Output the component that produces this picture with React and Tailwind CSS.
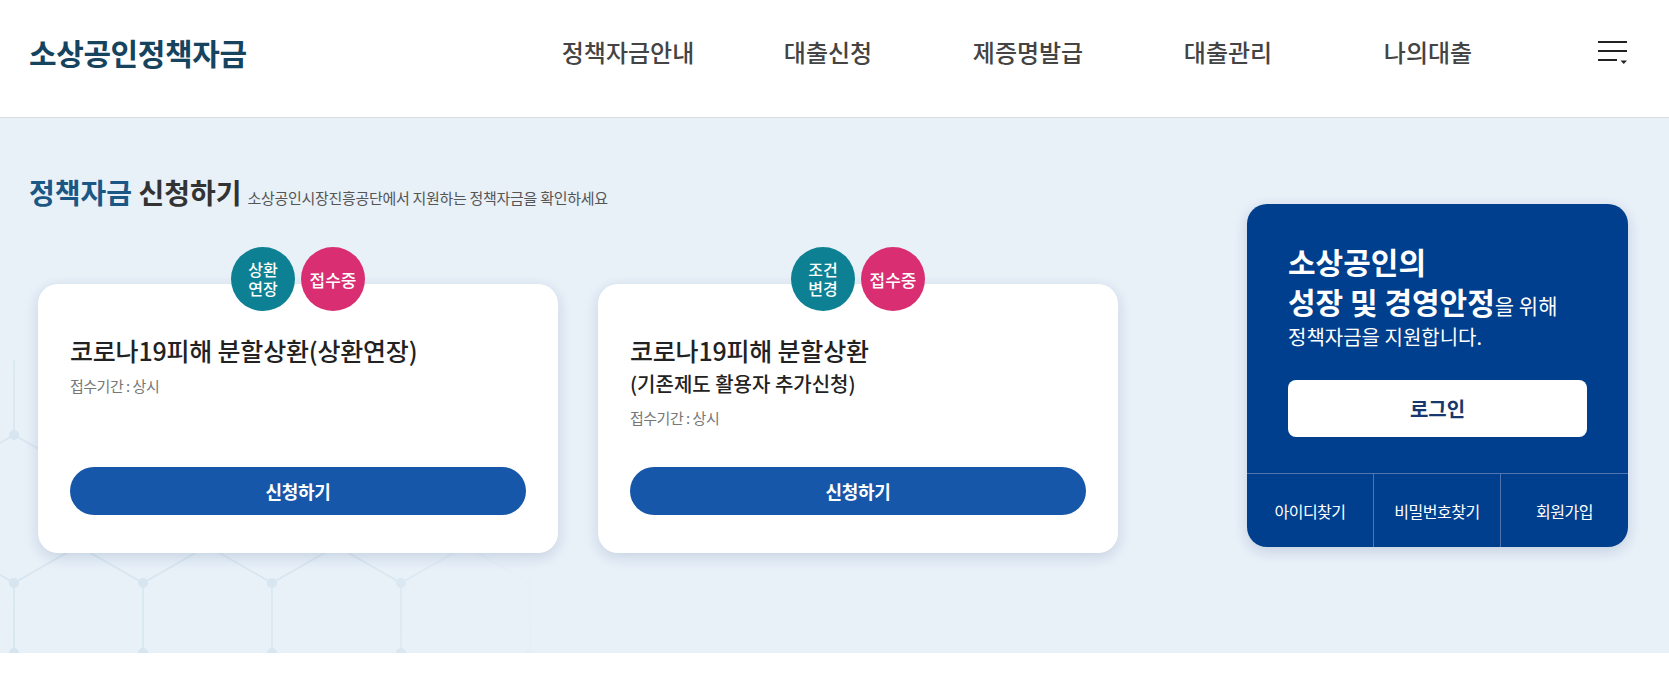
import React from 'react';

const font = { fontFamily: '"Noto Sans CJK KR", "Noto Sans", sans-serif' };

const navItems = ['정책자금안내', '대출신청', '제증명발급', '대출관리', '나의대출'];

const HexPattern = () => {
  const cols = [0, 1, 2, 3, 4];
  const w = 129;
  const xs = cols.map((i) => 14 + w * i);
  const lines = [];
  const dots = [];
  xs.forEach((x, i) => {
    const m = x + w / 2;
    const pm = x - w / 2;
    // lower row
    lines.push([x, 465, x, 545]);
    lines.push([x, 465, m, 428]);
    lines.push([pm, 428, x, 465]);
    lines.push([m, 428, m, 353]);
    // upper row
    lines.push([pm, 353, x, 317]);
    lines.push([x, 317, m, 353]);
    lines.push([x, 317, x, 242]);
    dots.push([x, 465]);
    dots.push([x, 535]);
    dots.push([x, 317]);
    if (i === 0) {
      lines.push([pm, 428, pm, 353]);
    }
  });
  return (
    <svg className="absolute left-0 top-0 pointer-events-none" width="620" height="535" viewBox="0 0 620 535">
      <defs>
        <radialGradient id="fade" cx="0" cy="535" r="540" gradientUnits="userSpaceOnUse">
          <stop offset="0" stopColor="#fff" stopOpacity="1" />
          <stop offset="0.7" stopColor="#fff" stopOpacity="0.85" />
          <stop offset="1" stopColor="#fff" stopOpacity="0" />
        </radialGradient>
        <mask id="m">
          <rect x="0" y="0" width="620" height="535" fill="url(#fade)" />
        </mask>
      </defs>
      <g mask="url(#m)" stroke="#d5e4ef" strokeWidth="1.5" fill="none">
        {lines.map((l, i) => (
          <line key={i} x1={l[0]} y1={l[1]} x2={l[2]} y2={l[3]} />
        ))}
        {dots.map((d, i) => (
          <circle key={'d' + i} cx={d[0]} cy={d[1]} r="5" fill="#d5e4ef" stroke="none" />
        ))}
      </g>
    </svg>
  );
};

const Badge = ({ color, children }) => (
  <div
    className={`w-[64px] h-[64px] rounded-full flex items-center justify-center text-white text-center text-[16px] leading-[19px] font-medium ${color}`}
  >
    {children}
  </div>
);

const LoanCard = ({ badge, title, sub }) => (
  <div className="relative w-[520px] h-[269px] bg-white rounded-[20px] shadow-[0_4px_14px_rgba(20,60,110,0.16)] flex flex-col px-[32px] pt-[50px] pb-[38px]">
    <div className="absolute -top-[37px] left-1/2 -translate-x-1/2 flex gap-[6px]">
      <Badge color="bg-[#0d8193]">{badge}</Badge>
      <Badge color="bg-[#d92e72]">
        <span className="text-[17px]">접수중</span>
      </Badge>
    </div>
    <p className="text-[25px] leading-[32px] font-medium text-[#222] tracking-[-0.2px]">{title}</p>
    {sub && <p className="mt-[4px] text-[20px] leading-[28px] font-medium text-[#222]">{sub}</p>}
    <p className="mt-[10px] text-[15px] leading-[20px] text-[#777] tracking-[-0.5px]">접수기간 : 상시</p>
    <button className="mt-auto h-[48px] w-full rounded-full bg-[#1757a9] text-white text-[18px] font-bold tracking-[-0.3px]">
      신청하기
    </button>
  </div>
);

export default function App() {
  return (
    <div style={font} className="w-full bg-white">
      {/* Header */}
      <header className="h-[118px] border-b border-[#dddddd] flex items-center pb-[13px]">
        <h1 className="pl-[29px] text-[30px] font-bold text-[#16445f] tracking-[-0.4px] leading-none">
          소상공인정책자금
        </h1>
        <nav className="ml-auto flex">
          {navItems.map((item) => (
            <a key={item} className="w-[200px] text-center text-[24px] text-[#444] font-medium">
              {item}
            </a>
          ))}
        </nav>
        <button className="ml-[70px] mr-[41px] w-[30px] h-[24px] pt-[1px]">
          <svg width="30" height="24" viewBox="0 0 30 24">
            <rect x="0" y="0" width="29" height="2" fill="#222" />
            <rect x="0" y="9" width="29" height="2" fill="#222" />
            <rect x="0" y="18" width="19" height="2" fill="#222" />
            <path d="M22.5 19.5 L29 19.5 L25.75 23 Z" fill="#222" />
          </svg>
        </button>
      </header>

      {/* Main section */}
      <section className="relative h-[535px] bg-[#e8f0f8] overflow-hidden">
        <HexPattern />
        <div className="relative flex">
          <div className="pl-[29px] pt-[57px]">
            <div className="flex items-baseline h-[34px]">
              <h2 className="text-[28px] leading-[34px] font-bold">
                <span className="text-[#1a5785]">정책자금</span> <span className="text-[#333]">신청하기</span>
              </h2>
              <span className="ml-[6px] text-[15px] text-[#555] tracking-[-0.3px]">
                소상공인시장진흥공단에서 지원하는 정책자금을 확인하세요
              </span>
            </div>
            <div className="mt-[75px] ml-[9px] flex gap-[40px]">
              <LoanCard
                badge={
                  <span>
                    상환
                    <br />
                    연장
                  </span>
                }
                title="코로나19피해 분할상환(상환연장)"
              />
              <LoanCard
                badge={
                  <span>
                    조건
                    <br />
                    변경
                  </span>
                }
                title="코로나19피해 분할상환"
                sub="(기존제도 활용자 추가신청)"
              />
            </div>
          </div>

          <div className="ml-auto mr-[41px] mt-[86px] w-[381px] h-[343px] rounded-[20px] bg-[#003f8d] shadow-[0_4px_14px_rgba(20,60,110,0.18)] flex flex-col overflow-hidden">
            <div className="px-[41px] pt-[37px] text-white">
              <p className="text-[30px] leading-[40px] font-bold">소상공인의</p>
              <p className="text-[30px] leading-[40px] font-bold">
                성장 및 경영안정<span className="text-[21px] font-normal">을 위해</span>
              </p>
              <p className="-mt-[1px] text-[20px] leading-[26px]">정책자금을 지원합니다.</p>
              <button className="mt-[30px] w-full h-[57px] bg-white rounded-[8px] text-[#17386e] text-[20px] font-bold">
                로그인
              </button>
            </div>
            <div className="mt-auto h-[74px] border-t border-[#4f74b0] grid grid-cols-3 text-white text-[16px] tracking-[-0.5px]">
              <div className="flex items-center justify-center border-r border-[#4f74b0]">아이디찾기</div>
              <div className="flex items-center justify-center border-r border-[#4f74b0]">비밀번호찾기</div>
              <div className="flex items-center justify-center">회원가입</div>
            </div>
          </div>
        </div>
      </section>
      <div className="h-[34px] bg-white" />
    </div>
  );
}
